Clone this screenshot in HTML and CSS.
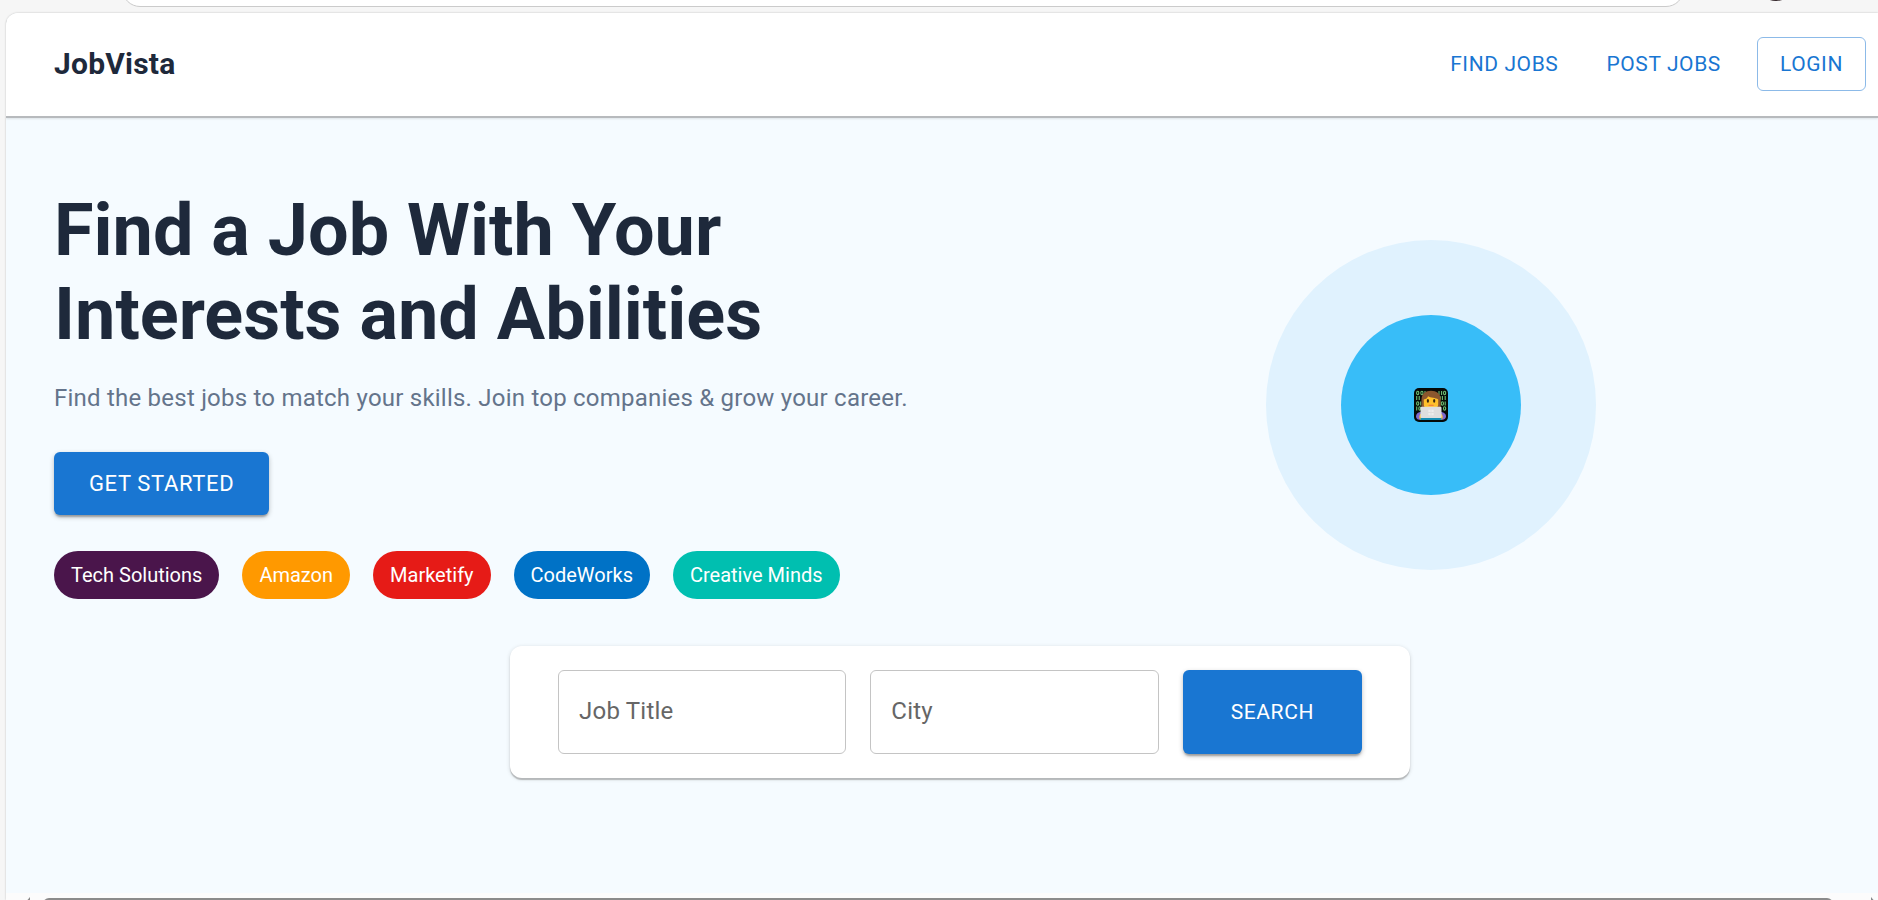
FILE: index.html
```html
<!DOCTYPE html>
<html lang="en">
<head>
<meta charset="utf-8">
<meta name="viewport" content="width=device-width, initial-scale=1">
<title>JobVista</title>
<link rel="stylesheet" href="styles.css">
</head>
<body>
<div class="chrome">
  <div class="omnibox"></div>
  <div class="avatar"></div>
</div>
<div class="viewport">
  <header class="header">
    <div class="brand">JobVista</div>
    <nav class="nav">
      <button type="button" class="nav-btn">FIND JOBS</button>
      <button type="button" class="nav-btn">POST JOBS</button>
      <button type="button" class="nav-btn nav-btn-outlined">LOGIN</button>
    </nav>
  </header>
  <main class="main">
    <section class="hero">
      <div class="intro">
        <h1 class="title">Find a Job With Your<br>Interests and Abilities</h1>
        <p class="subtitle">Find the best jobs to match your skills. Join top companies &amp; grow your career.</p>
        <button type="button" class="btn btn-large">GET STARTED</button>
        <div class="chips">
          <span class="chip chip-purple">Tech Solutions</span>
          <span class="chip chip-orange">Amazon</span>
          <span class="chip chip-red">Marketify</span>
          <span class="chip chip-blue">CodeWorks</span>
          <span class="chip chip-teal">Creative Minds</span>
        </div>
      </div>
      <div class="art">
        <div class="ring">
          <div class="disc">
            <svg class="coder" viewBox="0 0 34 34" role="img" aria-label="Woman technologist">
              <rect width="34" height="34" rx="5" fill="#050a08"/>
              <g fill="none" stroke="#6fbf73" stroke-width="1.1">
                <ellipse cx="3.7" cy="5" rx="1.1" ry="1.7"/><ellipse cx="7.9" cy="5" rx="1.1" ry="1.7"/><path d="M11 3v4M25 3v4M27.6 3v4"/><ellipse cx="30.6" cy="5" rx="1.1" ry="1.7"/>
                <path d="M2.7 8v4M5.2 8v4M28.4 8v4M31.2 8v4"/><ellipse cx="25.6" cy="10" rx=".8" ry="1.7"/>
                <ellipse cx="3.7" cy="15.5" rx="1.1" ry="1.7"/><path d="M6.7 13.5v4M31.2 13.5v4"/><ellipse cx="28.4" cy="15.5" rx="1.1" ry="1.7"/>
                <path d="M2.7 18.5v4"/><ellipse cx="5.7" cy="20.5" rx=".9" ry="1.7"/><ellipse cx="30.6" cy="20.5" rx="1.1" ry="1.7"/>
              </g>
              <path d="M7.500 19V11.500C7.500 6 11.500 2.800 17 2.800s9.700 3.200 9.700 8.700V19z" fill="#8b572e"/>
              <path d="M9.800 11.500c2.400-.3 3.600-1.500 4.200-3.200 2.500 1.900 7.500 1.200 10.200 3.200v5c0 3-2.700 5-7.200 5s-7.200-2-7.200-5z" fill="#ffc02b"/>
              <ellipse cx="13.900" cy="12.800" rx="1.100" ry="1.900" fill="#37260e"/>
              <ellipse cx="20.200" cy="12.800" rx="1.100" ry="1.900" fill="#37260e"/>
              <path d="M15 17.300h4.200" stroke="#f0713d" stroke-width="1.100" stroke-linecap="round"/>
              <path d="M7.500 24C3.800 24 2 26 2 28.500S4 32 7 32h20c3 0 5-1.300 5-3.500S30.200 24 26.500 24z" fill="#7e68ce"/>
              <path d="M7 25.500c-2 1.500-2.300 4.500-.8 6H9zM27 25.500c2 1.500 2.300 4.500.8 6H25z" fill="#ffc02b"/>
              <rect x="6.500" y="29.800" width="21" height="2.200" fill="#168fb5"/>
              <rect x="6.500" y="18.800" width="21" height="11.200" rx="1" fill="#dedede"/>
              <path d="M14.300 21.800h2.300v2.300h-2.300zM17.400 21.800h2.300v2.300h-2.300zM14.300 24.900h2.300v2.300h-2.300zM17.400 24.900h2.300v2.300h-2.300z" fill="#ededed"/>
            </svg>
          </div>
        </div>
      </div>
    </section>
    <form class="search">
      <input class="field" type="text" aria-label="Job Title" placeholder="Job Title">
      <input class="field" type="text" aria-label="City" placeholder="City">
      <button type="button" class="btn btn-search">SEARCH</button>
    </form>
  </main>
  <div class="scrollbar">
    <svg class="arrow" viewBox="0 0 6 7"><path d="M0 7 6 0v7z" fill="#8b8b8b"/></svg>
    <div class="thumb"></div>
    <svg class="arrow" viewBox="0 0 6 7"><path d="M0 0 6 7H0z" fill="#8b8b8b"/></svg>
  </div>
</div>
</body>
</html>
```
FILE: styles.css
```css
* { box-sizing: border-box; }

body {
  margin: 0;
  height: 100vh;
  display: flex;
  flex-direction: column;
  overflow: hidden;
  background: #f6f6f6;
  font-family: Roboto, "Liberation Sans", sans-serif;
  color: #1e293b;
}

button, input { font-family: inherit; margin: 0; }

/* Browser toolbar edge */
.chrome {
  flex: none;
  display: flex;
  height: 13px;
  overflow: hidden;
}
.omnibox {
  flex: 1;
  height: 37px;
  margin: -30px 0 0 122px;
  border: 1px solid #cbcbcb;
  border-radius: 18px;
  background: #fff;
}
.avatar {
  width: 40px;
  height: 40px;
  margin: -39px 82px 0 72px;
  border-radius: 50%;
  background: #33262a;
}

.viewport {
  flex: 1;
  display: flex;
  flex-direction: column;
  min-height: 0;
  margin-left: 6px;
  border-top-left-radius: 12px;
  box-shadow: 0 0 2px rgba(0, 0, 0, .25);
  background: #f5fbff;
  overflow: hidden;
}

.header {
  flex: none;
  position: relative;
  display: flex;
  align-items: center;
  justify-content: space-between;
  padding: 24px 12px 25px 48px;
  background: #fff;
  box-shadow: 0 2px 0 #b7babd, 0 3px 2px rgba(0, 0, 0, .1);
}
.brand {
  font-size: 30px;
  line-height: 48px;
  font-weight: 700;
  letter-spacing: .0075em;
}
.nav { display: flex; gap: 24px; }
.nav-btn {
  padding: 9px 12px;
  border: 0;
  border-radius: 6px;
  background: none;
  color: #1976d2;
  font-size: 21px;
  line-height: 36px;
  letter-spacing: .02857em;
}
.nav-btn-outlined {
  padding: 8px 22px;
  border: 1px solid #8cbae8;
}

.main { flex: 1; padding: 72px 12px 0 48px; }
.hero {
  display: grid;
  grid-template-columns: 1fr 1fr;
  gap: 72px;
  align-items: center;
}
.title {
  margin: 0 0 23px;
  padding-top: 1px;
  font-size: 72px;
  line-height: 84px;
  font-weight: 700;
}
.subtitle {
  margin: 0 0 36px;
  font-size: 24px;
  line-height: 36px;
  letter-spacing: .00938em;
  color: #64748b;
}
.btn {
  display: block;
  border: 0;
  border-radius: 6px;
  background: #1976d2;
  color: #fff;
  letter-spacing: .02857em;
  box-shadow: 0 3px 2px -1px rgba(0, 0, 0, .25), 0 2px 5px rgba(0, 0, 0, .24);
}
.btn-large { padding: 12px 35px; font-size: 22px; line-height: 39px; }
.btn-search { padding: 0 48px; font-size: 21px; line-height: 84px; }

.chips { display: flex; gap: 23px; margin: 36px 0 23px; }
.chip {
  padding: 0 17px;
  border-radius: 24px;
  font-size: 20px;
  line-height: 48px;
  white-space: nowrap;
  color: #fff;
}
.chip-purple { background: #4a154b; }
.chip-orange { background: #ff9900; }
.chip-red { background: #e61b17; }
.chip-blue { background: #0072c6; }
.chip-teal { background: #00bfb0; }

.art { display: flex; justify-content: center; }
.ring, .disc {
  display: flex;
  align-items: center;
  justify-content: center;
  border-radius: 50%;
}
.ring { width: 330px; height: 330px; background: #e0f2fe; }
.disc { width: 180px; height: 180px; background: #38bdf8; }
.coder { display: block; width: 34px; height: 34px; }

.search {
  display: flex;
  gap: 24px;
  max-width: 900px;
  margin: 24px auto 0;
  padding: 24px 48px;
  border-radius: 12px;
  background: #fff;
  box-shadow: 0 2px 1px #b5b8ba, 0 1px 4px rgba(0, 0, 0, .15);
}
.field {
  flex: 1;
  min-width: 0;
  height: 84px;
  padding: 0 20px 2px;
  border: 1px solid #c4c4c4;
  border-radius: 6px;
  background: #fff;
  font-size: 24px;
  letter-spacing: .00938em;
  color: #222;
}
.field::placeholder { color: #666; opacity: 1; }

.scrollbar {
  flex: none;
  display: flex;
  align-items: flex-start;
  height: 7px;
  padding: 4px 1px 0 18px;
  background: #fcfcfc;
  overflow: hidden;
}
.arrow { flex: none; width: 6px; height: 7px; }
.thumb {
  flex: 1;
  height: 12px;
  margin: 1px 38px 0 13px;
  border-radius: 6px;
  background: #8b8b8b;
}
```
